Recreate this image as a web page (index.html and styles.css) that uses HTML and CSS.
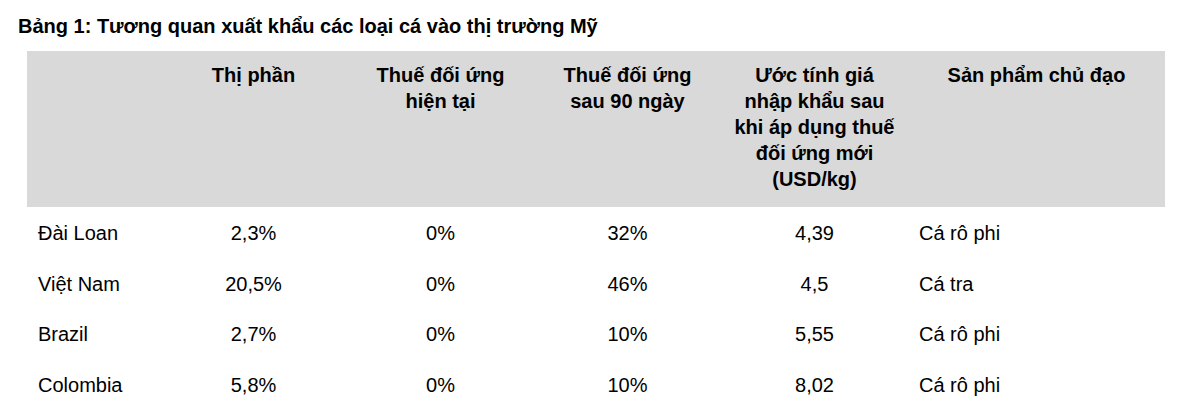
FILE: index.html
```html
<!DOCTYPE html>
<html lang="vi">
<head>
<meta charset="utf-8">
<title>Bảng 1</title>
<link rel="stylesheet" href="styles.css">
</head>
<body>
<div class="page">
  <h1 class="title">Bảng 1: Tương quan xuất khẩu các loại cá vào thị trường Mỹ</h1>
  <table class="tbl">
    <colgroup>
      <col class="c0"><col class="c1"><col class="c2"><col class="c3"><col class="c4"><col class="c5">
    </colgroup>
    <thead>
      <tr>
        <th></th>
        <th>Thị phần</th>
        <th>Thuế đối ứng<br>hiện tại</th>
        <th>Thuế đối ứng<br>sau 90 ngày</th>
        <th>Ước tính giá<br>nhập khẩu sau<br>khi áp dụng thuế<br>đối ứng mới<br>(USD/kg)</th>
        <th>Sản phẩm chủ đạo</th>
      </tr>
    </thead>
    <tbody>
      <tr><td class="name">Đài Loan</td><td>2,3%</td><td>0%</td><td>32%</td><td>4,39</td><td class="prod">Cá rô phi</td></tr>
      <tr><td class="name">Việt Nam</td><td>20,5%</td><td>0%</td><td>46%</td><td>4,5</td><td class="prod">Cá tra</td></tr>
      <tr><td class="name">Brazil</td><td>2,7%</td><td>0%</td><td>10%</td><td>5,55</td><td class="prod">Cá rô phi</td></tr>
      <tr><td class="name">Colombia</td><td>5,8%</td><td>0%</td><td>10%</td><td>8,02</td><td class="prod">Cá rô phi</td></tr>
    </tbody>
  </table>
</div>
</body>
</html>
```
FILE: styles.css
```css
html, body {
  margin: 0;
  padding: 0;
  background: #ffffff;
}
body {
  font-family: "Liberation Sans", Arial, sans-serif;
  color: #000000;
}
.page {
  padding: 14px 0 0 0;
}
.title {
  margin: 0 0 13px 18px;
  font-size: 20px;
  line-height: 24px;
  font-weight: bold;
}
.tbl {
  margin-left: 27px;
  width: 1138px;
  border-collapse: collapse;
  table-layout: fixed;
  font-size: 20px;
}
.c0 { width: 133px; }
.c1, .c2, .c3, .c4 { width: 187px; }
.c5 { width: 257px; }
.tbl thead th {
  background: #d9d9d9;
  font-weight: bold;
  text-align: center;
  vertical-align: top;
  line-height: 26px;
  padding: 11px 0 15px 0;
}
.tbl tbody td {
  text-align: center;
  line-height: 24.5px;
  padding: 14px 0 12px 0;
  white-space: nowrap;
}
.tbl tbody td.name,
.tbl tbody td.prod {
  text-align: left;
  padding-left: 11px;
}
```
